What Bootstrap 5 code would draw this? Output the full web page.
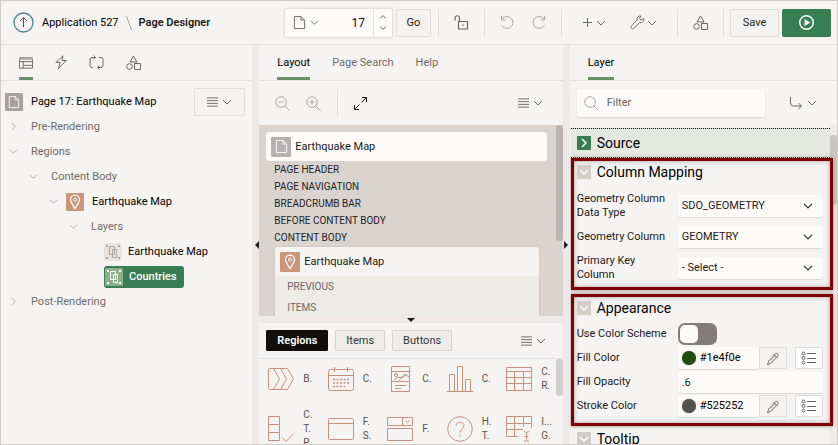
<!DOCTYPE html>
<html lang="en">
<head>
<meta charset="utf-8">
<meta name="viewport" content="width=device-width, initial-scale=1">
<title>Page Designer</title>
<link rel="stylesheet" href="https://cdn.jsdelivr.net/npm/bootstrap@5.3.0/dist/css/bootstrap.min.css">
<style>
body{font-family:Roboto,"Noto Sans",sans-serif;font-size:11px;line-height:14px;color:#1c1a18;background:#f6f4f2}
.designer{height:100vh;border:1px solid #cfcbc8;overflow:hidden}
svg{fill:none;stroke:currentColor;flex:none;display:block}
button{font:inherit;color:inherit}
a{color:inherit;text-decoration:none}
.plain{background:none;border:0;padding:0;display:flex;align-items:center;gap:4px}
.topbar{height:44px;border-bottom:1px solid #e3e0dd;padding:0 6px 0 12px}
.crumb-sep{margin:0 7px}
.bar-sep{width:1px;height:28px;background:#dedbd8;flex:none}
.topbar .bar-sep{margin:0 15px}
.topbar .sep-go{margin-left:7px}
.topbar .sep-save{margin-right:6px}
.topbar .sep-new{margin-right:21px}
.topbar .sep-shapes{margin-left:20px}
.boxed{height:28px;border:1px solid #dedbd8;border-radius:2px;background:#f5f3f1;display:flex;align-items:center;justify-content:center}
.go{width:35px;padding:0}.save{width:49px;padding:0;margin-right:3px}
.tight{gap:2px}
.run{width:49px;height:28px;background:#377f53;border:0;border-radius:2px;color:#fff}
.picker{width:107px;height:28px;background:#fcfbfa;border-radius:2px;box-shadow:0 0 2px 1px #dcd8d4}
.picker input{width:46px;border:0;background:none;font-size:12px;text-align:right;padding:0;color:#111}
.picker .spin{width:21px;border-left:1px solid #e3e0dd}
.muted{color:#aaa5a1}.mid{color:#6a6663}.dim{color:#706c69}
.side{flex:251 1 0}.centre{flex:303 1 0}.props{flex:267 1 0}
.split{width:7px;background:#ece9e6;flex:none;color:#222}
.split svg,.hsplit svg{fill:currentColor;stroke:none}
.hsplit{height:7px;background:#ece9e6;flex:none}
.tabstrip{height:36px;border-bottom:1px solid #e3e0dd;flex:none;gap:22px;padding-left:18px}
.tabstrip .plain{height:35px;border-bottom:3px solid transparent;border-top:3px solid transparent;justify-content:center}
.tabstrip .plain.active{border-bottom-color:#6b9068}
.page-row{height:24px;margin-top:9px;padding:0 7px 0 4px}
.tree .node{height:25px;gap:13px}
.tree .node.iconed{gap:8px}
.tile{width:18px;height:18px;border-radius:1px;display:flex;align-items:center;justify-content:center;flex:none;color:#fff}
.tile-lg{width:20px;height:20px}
.t-page{background:#a9a29b}.t-grey{background:#b5b1ae}.t-map{background:#cb9579}
.t-layer{background:#e6e3e0;color:#aaa6a3}.t-sel{background:#8bb189}
.chosen{background:#377f53;color:#fff;border-radius:3px;height:22px;padding:0 7px 0 1px;font-weight:500;gap:6px}
.lv1{padding-left:20px}.lv2{padding-left:40px}.lv3{padding-left:60px}.lv4{padding-left:95px}
.tree .lv4{gap:6px}
.tools{height:44px;flex:none}
.zoom-tools{padding:0 20px 0 16px}
.canvas{background:#d9d4d0;height:191px;flex:none;overflow:hidden}
.cardtop{background:#fcfbfa;border-radius:3px;height:29px;margin:7px 16px 0 7px;padding-left:5px}
.slot{font-size:10px;line-height:17px;padding-left:15px;color:#222}
.region{margin:1px 24px 0 16px;background:#ecebe7;border-radius:3px 3px 0 0;box-shadow:0 0 2px #b8b2ad}
.region-head{height:29px;background:#f6f4f2;border-radius:3px 3px 0 0;padding-left:5px}
.region .slot{line-height:21px;padding-left:12px;color:#6a6663}
.thumb{position:absolute;right:0;width:7px;background:#bab5b2;border-radius:3px}
.thumb-c{top:0;height:116px}.thumb-p{top:0;height:37px;background:#d2cecb}.thumb-r{top:10px;height:70px;background:#c9c5c2}
.track{position:absolute;right:0;top:0;bottom:0;width:7px;background:#eeebe8}
.pills{padding:7px 17px 7px 7px;gap:7px}
.pill{height:21px;border:1px solid #d5d1ce;border-radius:1px;background:#efedeb;padding:0 10px;display:flex;align-items:center;color:#333}
.pill.on{background:#100f0e;border-color:#100f0e;color:#fff;font-weight:600}
.gallery{display:grid;grid-template-columns:repeat(5,1fr);grid-auto-rows:40px;row-gap:10px;padding:0 0 0 6px;font-size:10px;color:#55514e}
.gallery .plain{gap:9px;padding-left:3px;text-align:left;line-height:14px}
.gallery svg{color:#c8917a}
.gallery span{width:14px}
.search{height:28px;background:#fcfbfa;border-radius:2px;box-shadow:0 1px 2px #d5d1cd;flex:1;padding-left:7px}
.search input{border:0;background:none;padding:0;width:100%;font-size:11px;outline:0}
.search input::placeholder{color:#6a6663;opacity:1}
.prop-tools{padding:0 20px 0 7px}
.prop-scroll{padding-top:3px}
.sec-head{gap:6px}
.sec-title{font-size:14px;line-height:18px;font-weight:400;margin:0;color:#000}
.twisty{width:14px;height:14px;border-radius:1px;background:#d0ccc8;color:#fff;display:flex;align-items:center;justify-content:center;padding:0;border:0}
.source{height:30px;background:#e4e8df;border-top:1px dotted #000;border-bottom:1px dotted #000;padding-left:6px;margin:0 7px 0 1px}
.source .twisty{background:#377f53}
.marked{border:3px solid #800000;height:132px;margin:0 4px 4px 1px;padding:2px 7px 0 3px;position:relative;z-index:2;background:#f6f4f2;box-shadow:0 0 4px #8d8886,inset 0 0 5px #a8a3a0}
.prop{display:grid;grid-template-columns:97px 1fr;column-gap:4px;align-items:center}
.prop .form-select,.field{height:22px;background-color:#fcfbfa;border:0;border-radius:2px;box-shadow:0 1px 1px #dcd8d4;font-size:11px;line-height:14px;padding:0 4px;color:#1c1a18;width:100%;min-width:0}
.prop .form-select{background-position:right 10px center;background-size:10px 10px}
.map-rows{display:grid;grid-auto-rows:28px;gap:3px;padding-top:11px}
.look-rows{display:grid;grid-auto-rows:22px;gap:2px;padding-top:6px}
.form-switch{padding:0;min-height:0;margin:0}
.form-switch .form-check-input{float:none;margin:0;width:39px;height:22px;border-radius:7px;background-color:#827d7a;border:2px solid #827d7a;background-image:none;position:relative;display:block}
.form-switch .form-check-input::before{content:"";display:block;width:18px;height:18px;border-radius:5px;background:#fcfbfa}
.form-switch .form-check-input:checked::before{margin-left:17px}
.swatch{width:14px;height:14px;border-radius:50%;flex:none;box-shadow:0 0 1px #777}
.c-fill{background:#1e4f0e}.c-stroke{background:#525252}
.small-btn{width:28px;height:22px;background:#f5f3f1;border:1px solid #dedbd8;border-radius:1px;display:flex;align-items:center;justify-content:center;padding:0;flex:none;color:#5f6468}
.tooltip-head{padding-left:7px}
</style>
</head>
<body>
<svg width="0" height="0" class="position-absolute" aria-hidden="true"><defs>
<symbol id="chev" viewBox="0 0 10 10"><path d="M1 3l4 4 4-4"/></symbol>
<symbol id="right" viewBox="0 0 10 10"><path d="M3 1l4 4-4 4"/></symbol>
<symbol id="doc" viewBox="0 0 14 16"><path d="M1.500 1.500h7l4 4v9h-11zM8.500 1.500v4h4"/></symbol>
<symbol id="menu" viewBox="0 0 12 10"><path d="M0 .5h12M0 3.500h12M0 6.500h12M0 9.500h12"/></symbol>
<symbol id="shapes" viewBox="0 0 15 15"><path d="M7.500 1l3.500 6H4zM8.500 8.500h6v6h-6z"/><circle cx="3.500" cy="11.500" r="2.800"/></symbol>
<symbol id="pin" viewBox="0 0 14 16"><path d="M7 14.500C5 11 2.500 8.500 2.500 5.700a4.500 4.500 0 0 1 9 0C11.500 8.500 9 11 7 14.500z" stroke-width="1.300"/><circle cx="7" cy="5.700" r="1.500"/></symbol>
<symbol id="layer" viewBox="0 0 14 14"><path d="M3.500 1.500h5v8h-5zM6.500 4.500h4v8h-4z"/><path d="M0 1h2M12 1h2M0 13h2M12 13h2" stroke-width="2"/></symbol>
<symbol id="drop" viewBox="0 0 16 16"><path d="M1.500 14.500l1.500-4 7-7.500c1.500-1.500 4 .5 2.500 2.500l-7 7.500zM8 3.500l4.500 4.500" /><path d="M5 10.500l5-5.500" stroke="#b59a80"/></symbol>
<symbol id="lov" viewBox="0 0 16 14"><circle cx="2.500" cy="2.500" r="1.500"/><circle cx="2.500" cy="7" r="1.500"/><circle cx="2.500" cy="11.500" r="1.500"/><path d="M6 2.500h9M6 7.500h9M6 11.500h9"/></symbol>
</defs></svg>

<div class="designer d-flex flex-column">
<header class="topbar d-flex align-items-center flex-shrink-0">
  <nav class="d-flex align-items-center">
    <a href="#" aria-label="Up"><svg width="21" height="21" viewBox="0 0 21 21"><circle cx="10.500" cy="10.500" r="9.500" stroke="#4f8690" stroke-width="1.300"/><path d="M10.500 15V6M7 9l3.500-3.500L14 9" stroke="#555"/></svg></a>
    <a href="#" class="ms-1 ps-1 text-black">Application 527</a>
    <svg class="crumb-sep muted" width="6" height="14" viewBox="0 0 6 14"><path d="M.5 0l5 14"/></svg>
    <a href="#" class="fw-semibold">Page Designer</a>
  </nav>
  <div class="d-flex align-items-center ms-auto">
    <div class="picker d-flex">
      <button class="plain ps-2 mid" aria-label="Page list"><svg width="13" height="15"><use href="#doc"/></svg><svg width="9" height="9"><use href="#chev"/></svg></button>
      <input type="text" value="17" aria-label="Page number" class="me-2 flex-grow-1">
      <div class="spin d-flex flex-column justify-content-evenly align-items-center mid">
        <button class="plain" aria-label="Next page"><svg width="6" height="4" viewBox="0 0 6 4"><path d="M0 3.500l3-3 3 3"/></svg></button>
        <button class="plain" aria-label="Previous page"><svg width="6" height="4" viewBox="0 0 6 4"><path d="M0 .5l3 3 3-3"/></svg></button>
      </div>
    </div>
    <button class="boxed go ms-1">Go</button>
    <div class="bar-sep sep-go"></div>
    <button class="plain mid" aria-label="Unlock page"><svg width="15" height="15" viewBox="0 0 15 15"><path d="M4.500 6.500h9v7.500h-9zM5.500 6.500V3a2.200 2.200 0 0 0-4.500 0v2.500M9 9.500v1.500" stroke-width="1.200"/></svg></button>
    <div class="bar-sep"></div>
    <button class="plain muted" aria-label="Undo"><svg width="15" height="15" viewBox="0 0 15 15"><path d="M1.500 1v4h4M1.500 5a6 6 0 1 1 0 5"/></svg></button>
    <button class="plain muted ms-3" aria-label="Redo"><svg width="15" height="15" viewBox="0 0 15 15"><path d="M13.500 1v4h-4M13.500 5a6 6 0 1 0 0 5"/></svg></button>
    <div class="bar-sep sep-new"></div>
    <button class="plain mid" aria-label="Create"><svg width="9" height="9" viewBox="0 0 9 9" stroke="#8a6a2e"><path d="M4.500 0v9M0 4.500h9"/></svg><svg width="10" height="10"><use href="#chev"/></svg></button>
    <button class="plain tight ms-4 mid" aria-label="Utilities"><svg width="15" height="15" viewBox="0 0 15 15"><path d="M13.500 3.500l-2.500 1.500-1.500-1.500L11 1C8.500.5 6.500 2.500 7.200 5L1.300 11c-1.200 1.500 1 3.700 2.500 2.500L9.700 7.500c2.600.8 4.700-1.500 3.800-4z"/></svg><svg width="10" height="10"><use href="#chev"/></svg></button>
    <div class="bar-sep sep-shapes"></div>
    <button class="plain mid" aria-label="Shared components"><svg width="15" height="15"><use href="#shapes"/></svg></button>
    <div class="bar-sep sep-save"></div>
    <button class="boxed save">Save</button>
    <button class="run d-flex align-items-center justify-content-center" aria-label="Save and run"><svg width="17" height="17" viewBox="0 0 17 17"><circle cx="8.500" cy="8.500" r="6.800" stroke-width="1.500"/><path d="M6.500 5l6 3.500-6 3.500z" fill="#fff" stroke="none"/></svg></button>
  </div>
</header>

<div class="d-flex flex-grow-1 overflow-hidden">
<aside class="side overflow-hidden">
  <div class="tabstrip d-flex">
    <button class="plain active mid" aria-label="Rendering"><svg width="14" height="14" viewBox="0 0 15 14"><path d="M.5 1.500h14v11H.5zM.5 5.500h14M4.500 5.500v7M4.500 9.500h10"/><path d="M0 2.500h15" stroke="#aaa6a3" stroke-width="2"/></svg></button>
    <button class="plain mid" aria-label="Dynamic actions"><svg width="12" height="15" viewBox="0 0 12 15"><path d="M8 .8L.8 7.500H5L3.500 13.500 11.200 5.500H7z"/></svg></button>
    <button class="plain mid" aria-label="Processing"><svg width="15" height="15" viewBox="0 0 15 15"><path d="M6.500 2.500H3a2 2 0 0 0-2 2v6a2 2 0 0 0 2 2h1M4.500 .5l2 2-2 2M10 2.500h2a2 2 0 0 1 2 2v6a2 2 0 0 1-2 2H8.500M10.500 10.500l-2 2 2 2"/></svg></button>
    <button class="plain mid" aria-label="Page shared components"><svg width="15" height="15"><use href="#shapes"/></svg></button>
  </div>
  <div class="page-row d-flex align-items-center justify-content-between">
    <div class="d-flex align-items-center gap-1 text-black"><span class="tile t-page me-1"><svg width="12" height="14"><use href="#doc"/></svg></span>Page 17: Earthquake Map</div>
    <button class="boxed px-2 mid" aria-label="Tree menu"><span class="d-flex gap-1 align-items-center px-1"><svg width="11" height="10"><use href="#menu"/></svg><svg width="10" height="10"><use href="#chev"/></svg></span></button>
  </div>
  <ul class="tree list-unstyled ps-2 mb-0 dim">
    <li class="node d-flex align-items-center"><svg class="muted" width="9" height="9"><use href="#right"/></svg>Pre-Rendering</li>
    <li class="node d-flex align-items-center"><svg class="muted" width="9" height="9"><use href="#chev"/></svg>Regions</li>
    <li class="node d-flex align-items-center lv1"><svg class="muted" width="9" height="9"><use href="#chev"/></svg>Content Body</li>
    <li class="node iconed d-flex align-items-center lv2"><svg class="muted" width="9" height="9"><use href="#chev"/></svg><span class="tile t-map"><svg width="14" height="16"><use href="#pin"/></svg></span><span class="text-black">Earthquake Map</span></li>
    <li class="node d-flex align-items-center lv3"><svg class="muted" width="9" height="9"><use href="#chev"/></svg>Layers</li>
    <li class="node d-flex align-items-center lv4 text-black"><span class="tile t-layer"><svg width="14" height="14"><use href="#layer"/></svg></span>Earthquake Map</li>
    <li class="node d-flex align-items-center lv4"><button class="plain chosen"><span class="tile t-sel"><svg width="14" height="14"><use href="#layer"/></svg></span>Countries</button></li>
    <li class="node d-flex align-items-center"><svg class="muted" width="9" height="9"><use href="#right"/></svg>Post-Rendering</li>
  </ul>
</aside>
<div class="split d-flex align-items-center justify-content-end"><svg width="4" height="8" viewBox="0 0 4 8"><path d="M4 0v8L0 4z"/></svg></div>

<main class="centre d-flex flex-column overflow-hidden">
  <div class="tabstrip d-flex dim">
    <button class="plain active text-black">Layout</button>
    <button class="plain">Page Search</button>
    <button class="plain">Help</button>
  </div>
  <div class="tools zoom-tools d-flex align-items-center">
    <button class="plain muted" aria-label="Zoom out"><svg width="15" height="15" viewBox="0 0 15 15"><circle cx="6" cy="6" r="5.300"/><path d="M10 10l4.500 4.500M3.500 6h5"/></svg></button>
    <button class="plain muted ms-3" aria-label="Zoom in"><svg width="15" height="15" viewBox="0 0 15 15"><circle cx="6" cy="6" r="5.300"/><path d="M10 10l4.500 4.500M3.500 6h5M6 3.500v5"/></svg></button>
    <div class="bar-sep mx-3"></div>
    <button class="plain" aria-label="Expand"><svg width="13" height="13" viewBox="0 0 13 13"><path d="M8 .5h4.500V5M12.500.5L7.500 5.500M.5 8v4.500H5M.5 12.500l5-5"/></svg></button>
    <button class="plain mid ms-auto" aria-label="Layout menu"><svg width="11" height="10"><use href="#menu"/></svg><svg width="10" height="10"><use href="#chev"/></svg></button>
  </div>
  <div class="canvas position-relative">
    <div class="thumb thumb-c"></div>
    <div class="cardtop d-flex align-items-center gap-1"><span class="tile tile-lg t-grey"><svg width="13" height="15"><use href="#doc"/></svg></span>Earthquake Map</div>
    <div class="slot">PAGE HEADER</div>
    <div class="slot">PAGE NAVIGATION</div>
    <div class="slot">BREADCRUMB BAR</div>
    <div class="slot">BEFORE CONTENT BODY</div>
    <div class="slot">CONTENT BODY</div>
    <div class="region">
      <div class="region-head d-flex align-items-center gap-1"><span class="tile tile-lg t-map"><svg width="14" height="16"><use href="#pin"/></svg></span>Earthquake Map</div>
      <div class="slot">PREVIOUS</div>
      <div class="slot">ITEMS</div>
    </div>
  </div>
  <div class="hsplit d-flex align-items-center justify-content-center"><svg width="8" height="4" viewBox="0 0 8 4"><path d="M0 0h8L4 4z"/></svg></div>
  <div class="pills d-flex align-items-center border-bottom flex-shrink-0">
    <button class="pill on">Regions</button>
    <button class="pill">Items</button>
    <button class="pill">Buttons</button>
    <button class="plain mid ms-auto" aria-label="Gallery menu"><svg width="11" height="10"><use href="#menu"/></svg><svg width="10" height="10"><use href="#chev"/></svg></button>
  </div>
  <div class="position-relative flex-grow-1 overflow-hidden">
    <div class="thumb thumb-p"></div>
    <div class="gallery">
      <button class="plain"><svg width="26" height="26" viewBox="0 0 26 26"><path d="M1.500 2.500h18l6 10.500-6 10.500h-18q-1 0-1-1v-19q0-1 1-1zM5.500 2.500l6 10.500-6 10.500M12.500 2.500l6 10.500-6 10.500"/></svg><span>B.</span></button>
      <button class="plain"><svg width="26" height="26" viewBox="0 0 26 26"><rect x=".5" y="3.500" width="25" height="21" rx="2"/><path d="M.5 9.500h25M6.500 1v5M19.500 1v5"/><path d="M5 13.500h16M5 17h16M5 20.500h12" stroke-dasharray="2 1.500" stroke-width="1.500"/></svg><span>C.</span></button>
      <button class="plain"><svg width="26" height="26" viewBox="0 0 26 26"><path d="M4.500.5h18v25h-18zM4.500 5.500h18M4.500 15.500h18M7 14l4-3 3 1 4-4 4 3M12 14l7-5M8 19.500h11M8 22.500h6"/><circle cx="9" cy="9" r="1.500"/></svg><span>C.</span></button>
      <button class="plain"><svg width="26" height="26" viewBox="0 0 26 26"><path d="M0 25.500h26M2.500 25.500v-17h5v17M10.500 25.500V.5h5v25M18.500 25.500v-12h5v12"/></svg><span>C.</span></button>
      <button class="plain"><svg width="26" height="26" viewBox="0 0 26 26"><path d="M.5 1.500h25v23H.5zM.5 5.500h25M.5 11.500h25M.5 17.500h25M8.500 5.500v19M17.500 5.500v19"/></svg><span>C. R.</span></button>
      <button class="plain"><svg width="26" height="26" viewBox="0 0 26 26"><path d="M.5.5h11v24H.5zM.5 8.500h11M.5 16.500h11M14 21.500l4 4 8-8"/></svg><span>C. T. P.</span></button>
      <button class="plain"><svg width="26" height="26" viewBox="0 0 26 26"><rect x=".5" y="2.500" width="25" height="21" rx="1"/><path d="M.5 7.500h25"/></svg><span>F. S.</span></button>
      <button class="plain"><svg width="26" height="26" viewBox="0 0 26 26"><path d="M.5 1.500h25v8H.5zM15.500 1.500v8M18.500 4.500l2 2 2-2M.5 12.500h25v12H.5z"/></svg><span>F.</span></button>
      <button class="plain"><svg width="26" height="26" viewBox="0 0 26 26"><circle cx="13" cy="13" r="12.300"/><path d="M9 10c0-5 8-5 8-.5 0 3.500-4 3-4 7M13 18.500v2"/></svg><span>H. T.</span></button>
      <button class="plain"><svg width="26" height="26" viewBox="0 0 26 26"><path d="M12 20.500H.5v-20h25V12M.5 7.500h25M.5 13.500H17M8.500.5v20M17.500.5V11M18 15.500q2.500 0 2.500 2v6q0 2-2.500 2M23 15.500q-2.500 0-2.500 2v6q0 2 2.500 2M18.500 20.500h4"/></svg><span>I... G.</span></button>
    </div>
  </div>
</main>
<div class="split d-flex align-items-center justify-content-center"><svg width="4" height="8" viewBox="0 0 4 8"><path d="M0 0v8l4-4z"/></svg></div>

<section class="props d-flex flex-column overflow-hidden">
  <div class="tabstrip d-flex"><button class="plain active text-black">Layer</button></div>
  <div class="tools prop-tools d-flex align-items-center">
    <label class="search d-flex align-items-center gap-2"><svg class="muted" width="15" height="15" viewBox="0 0 15 15"><circle cx="6" cy="6" r="5.300"/><path d="M10 10l4.500 4.500"/></svg><input type="search" placeholder="Filter" aria-label="Filter"></label>
    <button class="plain mid ms-4" aria-label="Go to group"><svg width="14" height="13" viewBox="0 0 14 13"><path d="M1.500 0v6a3 3 0 0 0 3 3h8M9.500 6l3 3-3 3"/></svg><svg width="10" height="10"><use href="#chev"/></svg></button>
  </div>
  <div class="prop-scroll position-relative flex-grow-1 overflow-hidden">
    <div class="track"></div><div class="thumb thumb-r"></div>
    <div class="source sec-head d-flex align-items-center"><button class="twisty" aria-label="Expand Source"><svg width="10" height="10" stroke-width="1.500"><use href="#right"/></svg></button><h2 class="sec-title">Source</h2></div>
    <div class="marked">
      <div class="sec-head d-flex align-items-center"><button class="twisty" aria-label="Collapse Column Mapping"><svg width="10" height="10" stroke-width="1.500"><use href="#chev"/></svg></button><h2 class="sec-title">Column Mapping</h2></div>
      <div class="map-rows">
        <div class="prop"><label for="dt">Geometry Column Data Type</label><select id="dt" class="form-select"><option>SDO_GEOMETRY</option></select></div>
        <div class="prop"><label for="gc">Geometry Column</label><select id="gc" class="form-select"><option>GEOMETRY</option></select></div>
        <div class="prop"><label for="pk">Primary Key<br>Column</label><select id="pk" class="form-select"><option>- Select -</option></select></div>
      </div>
    </div>
    <div class="marked">
      <div class="sec-head d-flex align-items-center"><button class="twisty" aria-label="Collapse Appearance"><svg width="10" height="10" stroke-width="1.500"><use href="#chev"/></svg></button><h2 class="sec-title">Appearance</h2></div>
      <div class="look-rows">
        <div class="prop"><label for="cs">Use Color Scheme</label><div class="form-check form-switch"><input id="cs" class="form-check-input" type="checkbox" role="switch"></div></div>
        <div class="prop"><label for="fc">Fill Color</label><div class="d-flex"><div class="field d-flex align-items-center gap-1"><span class="swatch c-fill"></span><input id="fc" class="border-0 bg-transparent p-0 w-100" value="#1e4f0e"></div><button class="small-btn me-2" aria-label="Pick fill color"><svg width="15" height="15"><use href="#drop"/></svg></button><button class="small-btn bg-white" aria-label="Fill color values"><svg width="16" height="14"><use href="#lov"/></svg></button></div></div>
        <div class="prop"><label for="fo">Fill Opacity</label><input id="fo" class="field" value=".6"></div>
        <div class="prop"><label for="sc">Stroke Color</label><div class="d-flex"><div class="field d-flex align-items-center gap-1"><span class="swatch c-stroke"></span><input id="sc" class="border-0 bg-transparent p-0 w-100" value="#525252"></div><button class="small-btn me-2" aria-label="Pick stroke color"><svg width="15" height="15"><use href="#drop"/></svg></button><button class="small-btn bg-white" aria-label="Stroke color values"><svg width="16" height="14"><use href="#lov"/></svg></button></div></div>
      </div>
    </div>
    <div class="tooltip-head sec-head d-flex align-items-center"><button class="twisty" aria-label="Collapse Tooltip"><svg width="10" height="10" stroke-width="1.500"><use href="#chev"/></svg></button><h2 class="sec-title">Tooltip</h2></div>
  </div>
</section>
</div>
</div>
<script src="https://cdn.jsdelivr.net/npm/bootstrap@5.3.0/dist/js/bootstrap.bundle.min.js"></script>
</body>
</html>
